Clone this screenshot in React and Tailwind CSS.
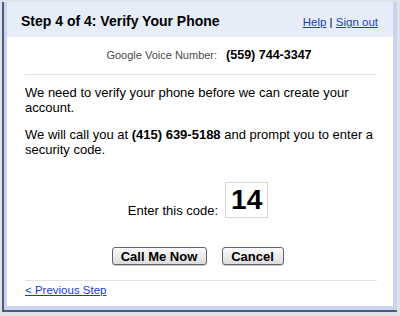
import React from "react";

/**
 * Step 4 of the Google Voice setup: verify the user's phone by calling it.
 */
function Header() {
  return (
    <div className="flex h-[35px] items-baseline justify-between bg-[#e6edf9] pl-[14px] pr-[15px] pt-[11px]">
      <h1 className="text-[14px] font-bold leading-[17px] text-black">Step 4 of 4: Verify Your Phone</h1>
      <div className="text-[11.5px] leading-[14px] text-[#1a3ec2]">
        <a href="#" className="underline">Help</a>
        <span className="text-black"> | </span>
        <a href="#" className="underline">Sign out</a>
      </div>
    </div>
  );
}

function Button({ children, width }) {
  return (
    <button
      className={`flex h-[18px] items-center justify-center rounded-[3px] border border-[#5f6470] bg-gradient-to-b from-[#fbfbfb] to-[#dcdcdc] text-[13px] font-bold leading-none text-black shadow-[0_1px_0_#c8c8c8] ${width}`}
    >
      {children}
    </button>
  );
}

export default function App() {
  return (
    <div
      className="h-[316px] w-[400px] bg-[#dfe2e8] pb-[4px] pl-[2px] pr-[3px] pt-[2px]"
      style={{ fontFamily: '"Liberation Sans", Arial, sans-serif' }}
    >
      <div className="h-full border-b-2 border-l-2 border-[#4e5a73]">
        <div className="flex h-full flex-col border-b-[4px] border-l-[3px] border-r-[4px] border-[#c6d5f0] bg-white">
          <Header />

          <div className="flex flex-col pl-[18px] pr-[16px]">
            <div className="mt-[10px] flex items-baseline justify-center pl-[16px] leading-[16px]">
              <span className="text-[11px] text-[#4a4a4a]">Google Voice Number:</span>
              <span className="ml-[9px] text-[12.5px] font-bold text-black">(559) 744-3347</span>
            </div>

            <div className="mt-[11px] h-px bg-[#e2e2e2]" />

            <p className="mt-[10px] text-[13px] leading-[15px] text-black">
              We need to verify your phone before we can create your account.
            </p>
            <p className="mt-[12px] text-[13px] leading-[15px] text-black">
              We will call you at <b>(415) 639-5188</b> and prompt you to enter a security code.
            </p>

            <div className="mt-[25px] flex items-end justify-center gap-[7px] pr-[6px]">
              <span className="text-[13px] leading-[15px] text-black">Enter this code:</span>
              <div className="flex h-[36px] w-[43px] items-center justify-center border border-[#d4d4d4] text-[28px] font-bold leading-none text-black">
                14
              </div>
            </div>

            <div className="mt-[29px] flex justify-center gap-[15px] pr-[7px]">
              <Button width="w-[95px]">Call Me Now</Button>
              <Button width="w-[62px]">Cancel</Button>
            </div>

            <div className="mt-[15px] h-px bg-[#e2e2e2]" />

            <a href="#" className="mt-[2px] self-start text-[11.5px] leading-[14px] text-[#1a3ec2] underline">
              &lt; Previous Step
            </a>
          </div>
        </div>
      </div>
    </div>
  );
}
